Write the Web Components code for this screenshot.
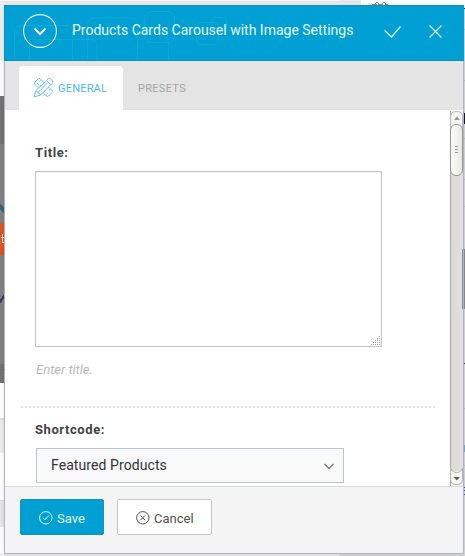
<!DOCTYPE html>
<html lang="en">
<head>
<meta charset="utf-8">
<title>Products Cards Carousel with Image Settings</title>
<style>
html,body{margin:0;width:465px;height:556px;overflow:hidden}
body{font-family:Roboto,"Liberation Sans",sans-serif;position:relative;background:#fff}
</style>
</head>
<body>
<page-backdrop></page-backdrop>
<settings-dialog>
  <dialog-header slot="header">Products Cards Carousel with Image Settings</dialog-header>
  <tab-bar slot="tabs">
    <tab-item active>GENERAL</tab-item>
    <tab-item>PRESETS</tab-item>
  </tab-bar>
  <settings-form slot="body"></settings-form>
  <scroll-rail slot="rail"></scroll-rail>
  <action-button slot="footer" primary>Save</action-button>
  <action-button slot="footer">Cancel</action-button>
</settings-dialog>
<script>
function define(name, html) {
  const t = document.createElement('template');
  t.innerHTML = html;
  customElements.define(name, class extends HTMLElement {
    constructor() {
      super();
      this.attachShadow({mode: 'open'}).appendChild(t.content.cloneNode(true));
    }
  });
}

define('page-backdrop', `
<style>:host{position:absolute;inset:0;display:block}svg{display:block}</style>
<svg width="465" height="556" shape-rendering="crispEdges">
  <rect width="465" height="556" fill="#fff"/>
  <rect width="361" height="61" fill="#eeeeee"/>
  <rect width="340" height="1" fill="#fafafa"/>
  <rect y="1" width="361" height="1" fill="#e3e3e3"/>
  <g fill="none" stroke="#888" shape-rendering="auto"><path d="M372 4.500h5M379 4.500h4M385 4.500h3M376 2.500h2M383 2.500h2M375.500 3v2M378.500 3v2M382.500 3v2M385.500 3v2"/></g>
  <rect y="61" width="5" height="35" fill="#fcfcfc"/>
  <rect y="96" width="5" height="48" fill="#737373"/>
  <rect y="144" width="5" height="220" fill="#828282"/>
  <path d="M0 203l5 6v6l-5-6z" fill="#35667e"/>
  <rect y="223" width="5" height="32" fill="#df5526"/>
  <path d="M1 237.500h3M2.500 234v8h2" fill="none" stroke="#f8dcd0"/>
  <path d="M5 293l-5 7v4l5-7z" fill="#343f6d"/>
  <rect y="364" width="5" height="19" fill="#737373"/>
  <rect x="3" y="369" width="2" height="1" fill="#555"/>
  <rect y="418" width="5" height="2" fill="#dedede"/>
  <rect y="420" width="5" height="33" fill="#ececec"/>
  <rect y="500" width="5" height="1" fill="#dadada"/>
  <rect y="501" width="5" height="26" fill="#e6e6e6"/>
  <rect y="554" width="339" height="2" fill="#e9e9e9"/>
  <rect x="339" y="554" width="126" height="2" fill="#d6d6d8"/>
  <rect x="464" width="1" height="556" fill="#d8d9dd"/>
  <rect x="464" width="1" height="8" fill="#fff"/>
  <rect x="464" y="8" width="1" height="1" fill="#222"/>
  <rect x="464" y="113" width="1" height="11" fill="#17182c"/>
  <rect x="464" y="249" width="1" height="60" fill="#8d8d8d"/>
  <g fill="#b8bbc2"><rect x="464" y="29" width="1" height="1"/><rect x="464" y="80" width="1" height="1"/><rect x="464" y="138" width="1" height="1"/><rect x="464" y="179" width="1" height="1"/><rect x="464" y="206" width="1" height="1"/><rect x="464" y="408" width="1" height="1"/><rect x="464" y="465" width="1" height="1"/></g>
  <rect x="464" y="363" width="1" height="1" fill="#443c35"/>
  <rect x="464" y="445" width="1" height="7" fill="#62b5d8"/>
  <path d="M464 487h1v1h-1zM464 490h1v1h-1zM464 494h1v1h-1z" fill="#146b8f"/>
</svg>`);

define('settings-dialog', `
<style>
:host{position:absolute;left:4px;top:5px;width:460px;height:549px;display:grid;grid-template-rows:56px 49px 376px 68px;box-sizing:border-box;box-shadow:0 0 5px rgba(0,0,0,.1)}
.tabs,.body,.foot{box-sizing:border-box;border:solid #afb5bf;border-width:0 1px}
.tabs{background:#e4e4e4}
.body{background:#fff;display:flex;overflow:hidden}
.foot{background:#f4f4f4;border-bottom-width:1px;padding:13px 15px 0;display:flex;gap:13px;align-items:flex-start;box-shadow:inset 0 1px #dadada}
.body{position:relative}
.grip{position:absolute;right:0;top:139px;width:1px;height:60px;background:#8d8d8d}
</style>
<slot name="header"></slot>
<div class="tabs"><slot name="tabs"></slot></div>
<div class="body"><slot name="body"></slot><slot name="rail"></slot><i class="grip"></i></div>
<div class="foot"><slot name="footer"></slot></div>`);

define('dialog-header', `
<style>
:host{position:relative;display:flex;align-items:center;box-sizing:border-box;height:56px;background:#00a0d4;border:1px solid #0b90bf;border-width:1px 0 1px 1px;color:#e6f6fb;font-size:14px;padding-left:18px}
.art{position:absolute;left:-1px;top:-1px}
.toggle{flex:none;position:relative;margin-top:-4px}
.title{position:relative;width:312px;margin-left:15px;margin-top:-6px;line-height:18px;white-space:nowrap}
.act{position:relative;flex:none;margin-top:-3px}
.x{margin-left:28px;margin-top:-4px}
svg{display:block}
</style>
<svg class="art" width="260" height="55" fill="none" stroke="#12a7d9">
 <path d="M10.500 54V27.500q0-7 7-7h45q6 0 6 6V54M25.500 54V34.500H87q6 0 6 6V54M83.500 54V20q0-7 7-7h37q6 0 6 6V54M164.500 38v16"/>
 <rect x="140.500" y="6.500" width="30" height="31" rx="7"/><rect x="192.500" y="17.500" width="22" height="22" rx="5"/><rect x="207.500" y="12.500" width="15" height="14" rx="4"/>
</svg>
<svg class="toggle" width="34" height="34" fill="none" stroke="#e3f5fb"><circle cx="17" cy="17" r="16.400" stroke-width="1.100"/><path d="M11.500 14.500l5.500 5.500 5.500-5.500" stroke="#fff" stroke-width="2"/></svg>
<span class="title"><slot></slot></span>
<svg class="act" width="17" height="12" fill="none" stroke="#dff4fb" stroke-width="1.300"><path d="M.5 4.500l7 6.500 9-10.500"/></svg>
<svg class="act x" width="13" height="13" fill="none" stroke="#dff4fb" stroke-width="1.300"><path d="M.5 .5l12 12M12.500 .5l-12 12"/></svg>`);

define('tab-bar', `
<style>:host{display:flex;padding:5px 0 0 14px;height:44px}</style><slot></slot>`);

customElements.define('tab-item', class extends HTMLElement {
  constructor() {
    super();
    const active = this.hasAttribute('active');
    this.attachShadow({mode: 'open'}).innerHTML = `
<style>
:host{display:flex;align-items:center;box-sizing:border-box;height:44px;padding:0 15px;font-size:11px;letter-spacing:.3px;color:#a4a4a4}
:host([active]){width:104px;background:#fff;border-radius:4px 4px 0 0;color:#4bbbe2;padding:0 14px;letter-spacing:.2px}
svg{display:block;margin-right:4px;margin-top:-2px;flex:none}
</style>${active ? `
<svg width="21" height="21" viewBox="0 0 21 21" fill="none" stroke="#63c5e8" stroke-width="1">
 <path d="M5.500 1.500L1.500 5.500Q1 6 1.500 7L13.500 19Q14.500 20 15.500 19L19 15.500Q20 14.500 19 13.500L7 1.500Q6 1 5.500 1.500zM8.500 3L7 4.500M4 6l2 2M6 9.500l1.500-1.500M15 9.500L13.500 11M17.500 12l-2 2M11 15l1.500-1.500M13.500 17.500l1-1" />
 <path fill="#fff" d="M15.500 1.500L3 13.500 1 20l6.500-2L19.500 6Q20.500 5 19.500 4L17.500 1.500Q16.500.5 15.500 1.500z"/>
 <path d="M3 13.500l4.500 4.500M13.500 3.500l4 4M15 5.500L5 15.500M1.500 18.500l1 1"/>
</svg>` : ''}<slot></slot>`;
  }
});

define('settings-form', `
<style>
:host{display:block;flex:none;width:445px;height:376px;box-sizing:border-box;overflow:hidden;padding:34px 15px 0 16px;color:#424242}
.label{font-size:13px;line-height:17px;font-weight:700;padding-left:14px;letter-spacing:.58px}
.area{box-sizing:border-box;width:347px;height:176px;margin:10px 0 0 14px;border:1px solid #c4c4c4;box-shadow:inset 0 1px 2px rgba(0,0,0,.07);display:flex;justify-content:flex-end;align-items:flex-end}
.hint{margin:14px 0 0 15px;font-size:13px;line-height:17px;font-style:italic;color:#bababa}
.rule{height:2px;margin:28px 0 13px;background:repeating-linear-gradient(90deg,#e3e3e3 0 2px,transparent 2px 4px)}
.select{box-sizing:border-box;width:308px;height:35px;margin:10px 0 0 15px;border:1px solid #bac4cb;background:#f9f9f9;display:flex;align-items:center;justify-content:space-between;padding:0 9px 0 14px;font-size:14px;letter-spacing:.08px;color:#333}
.select span{margin-top:-2px}
.select svg{margin-top:2px}
svg{display:block}
</style>
<div class="label">Title:</div>
<div class="area"><svg width="10" height="10" fill="#a6a6a6" shape-rendering="crispEdges"><path d="M8 0h1v1h-1zM6 2h1v1h-1zM8 2h1v1h-1zM4 4h1v1h-1zM6 4h1v1h-1zM8 4h1v1h-1zM2 6h1v1h-1zM4 6h1v1h-1zM6 6h1v1h-1zM8 6h1v1h-1zM0 8h1v1h-1zM2 8h1v1h-1zM4 8h1v1h-1zM6 8h1v1h-1zM8 8h1v1h-1z"/></svg></div>
<div class="hint">Enter title.</div>
<div class="rule"></div>
<div class="label">Shortcode:</div>
<div class="select"><span>Featured Products</span><svg width="10" height="7" fill="none" stroke="#777" stroke-width="1.300"><path d="M.5 1l4.500 4.500L9.500 1"/></svg></div>`);

define('scroll-rail', `
<style>
:host{display:flex;flex-direction:column;box-sizing:border-box;width:13px;height:376px;padding-top:1px;flex:none}
svg{display:block}
</style>
<svg width="13" height="375">
 <defs><linearGradient id="t"><stop offset="0" stop-color="#d8d7d5"/><stop offset="1" stop-color="#e2e1df"/></linearGradient><linearGradient id="h"><stop offset="0" stop-color="#fff"/><stop offset="1" stop-color="#e5e5e2"/></linearGradient></defs>
 <rect width="13" height="375" fill="#efeeec"/>
 <rect x="0" y="8" width="13" height="352" fill="url(#t)"/>
 <path d="M.5 0v375" stroke="#aaa9a3"/>
 <path d="M.5 22V6q0-5.500 6-5.500t6 5.500v16z" fill="#f4f4f2" stroke="#bab8b4"/>
 <path d="M4 9h6L7 5.500z" fill="#979797"/>
 <rect x=".5" y="13.500" width="12" height="51" rx="5.500" fill="url(#h)" stroke="#969690"/>
 <path d="M5 35.500h3M5 38.500h3M5 41.500h3" stroke="#999"/>
 <path d="M.5 357q1 4.500 6 4.500t6-4.500v11q0 5.500-6 5.500t-6-5.500z" fill="#f8f8f7" stroke="#b4b2ad"/>
 <path d="M3.500 366h6.500l-3.250 3.500z" fill="#5e5e5e"/>
</svg>`);

customElements.define('action-button', class extends HTMLElement {
  constructor() {
    super();
    const mark = this.hasAttribute('primary') ? 'M4 6.800l2 2 4-4.300' : 'M4.500 4.500l4.500 4.500M9 4.500L4.500 9';
    this.attachShadow({mode: 'open'}).innerHTML = `
<style>
:host{display:flex;align-items:center;box-sizing:border-box;width:95px;height:36px;border:1px solid #c6c6c6;border-radius:2px;background:#fff;padding-left:18px;font-size:13px;color:#505050}
:host([primary]){width:84px;background:#00a0d4;border-color:#1694be;color:#e6f6fb}
svg{display:block;flex:none;margin:1px 4px 0 0}
span{line-height:17px;padding-top:3px}
</style>
<svg width="14" height="14" fill="none" stroke="currentColor"><circle cx="6.800" cy="6.800" r="6.200"/><path d="${mark}"/></svg><span><slot></slot></span>`;
  }
});
</script>
</body>
</html>
